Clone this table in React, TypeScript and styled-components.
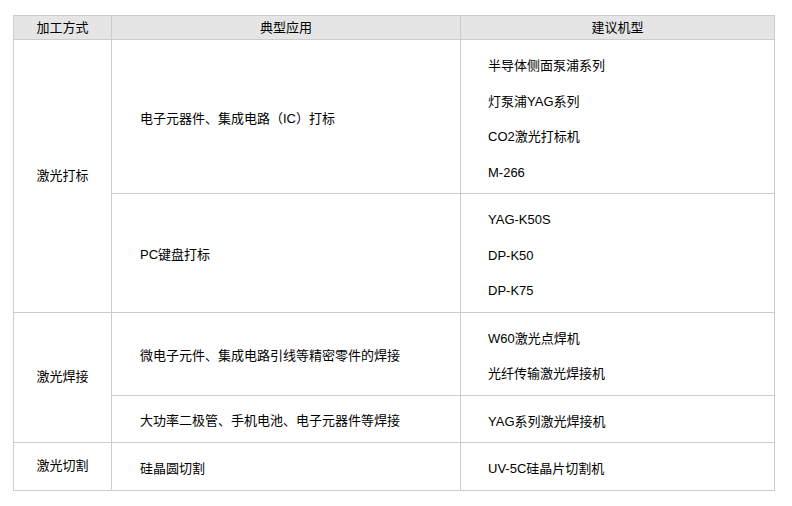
import React from "react";
import styled, { createGlobalStyle } from "styled-components";

const GlobalStyle = createGlobalStyle`
  html, body {
    margin: 0;
    padding: 0;
    background: #ffffff;
  }
  body {
    font-family: "Liberation Sans", "Noto Sans CJK SC", sans-serif;
    font-size: 13px;
    color: #000;
  }
`;

const Page = styled.div`
  padding: 15px 0 0 13px;
`;

const Grid = styled.div`
  display: grid;
  grid-template-columns: 98px 349px 314px;
  width: 761px;
  border-top: 1px solid #cccccc;
  border-left: 1px solid #cccccc;
`;

const Cell = styled.div<{ $rows?: number }>`
  box-sizing: border-box;
  border-right: 1px solid #cccccc;
  border-bottom: 1px solid #cccccc;
  display: flex;
  align-items: center;
  grid-row: ${(p) => (p.$rows ? `span ${p.$rows}` : "auto")};
`;

const HeadCell = styled(Cell)`
  background: #e5e5e5;
  justify-content: center;
  line-height: 23px;
  height: 24px;
`;

const MethodCell = styled(Cell)`
  justify-content: center;
  line-height: 18px;
`;

const UseCell = styled(Cell)`
  padding: 5px 0 0 28px;
  line-height: 18px;
`;

const ModelCell = styled(Cell)`
  flex-direction: column;
  align-items: flex-start;
  padding: 8px 0 3px 27px;
`;

const Model = styled.div`
  line-height: 35.5px;
  white-space: nowrap;
`;

type Group = {
  method: string;
  rows: { use: string; models: string[] }[];
};

const groups: Group[] = [
  {
    method: "激光打标",
    rows: [
      {
        use: "电子元器件、集成电路（IC）打标",
        models: ["半导体侧面泵浦系列", "灯泵浦YAG系列", "CO2激光打标机", "M-266"],
      },
      { use: "PC键盘打标", models: ["YAG-K50S", "DP-K50", "DP-K75"] },
    ],
  },
  {
    method: "激光焊接",
    rows: [
      {
        use: "微电子元件、集成电路引线等精密零件的焊接",
        models: ["W60激光点焊机", "光纤传输激光焊接机"],
      },
      { use: "大功率二极管、手机电池、电子元器件等焊接", models: ["YAG系列激光焊接机"] },
    ],
  },
  {
    method: "激光切割",
    rows: [{ use: "硅晶圆切割", models: ["UV-5C硅晶片切割机"] }],
  },
];

export default function App() {
  return (
    <Page>
      <GlobalStyle />
      <Grid>
        <HeadCell>加工方式</HeadCell>
        <HeadCell>典型应用</HeadCell>
        <HeadCell>建议机型</HeadCell>
        {groups.map((g) =>
          g.rows.map((r, i) => (
            <React.Fragment key={g.method + i}>
              {i === 0 && <MethodCell $rows={g.rows.length}>{g.method}</MethodCell>}
              <UseCell>{r.use}</UseCell>
              <ModelCell>
                {r.models.map((m) => (
                  <Model key={m}>{m}</Model>
                ))}
              </ModelCell>
            </React.Fragment>
          ))
        )}
      </Grid>
    </Page>
  );
}
